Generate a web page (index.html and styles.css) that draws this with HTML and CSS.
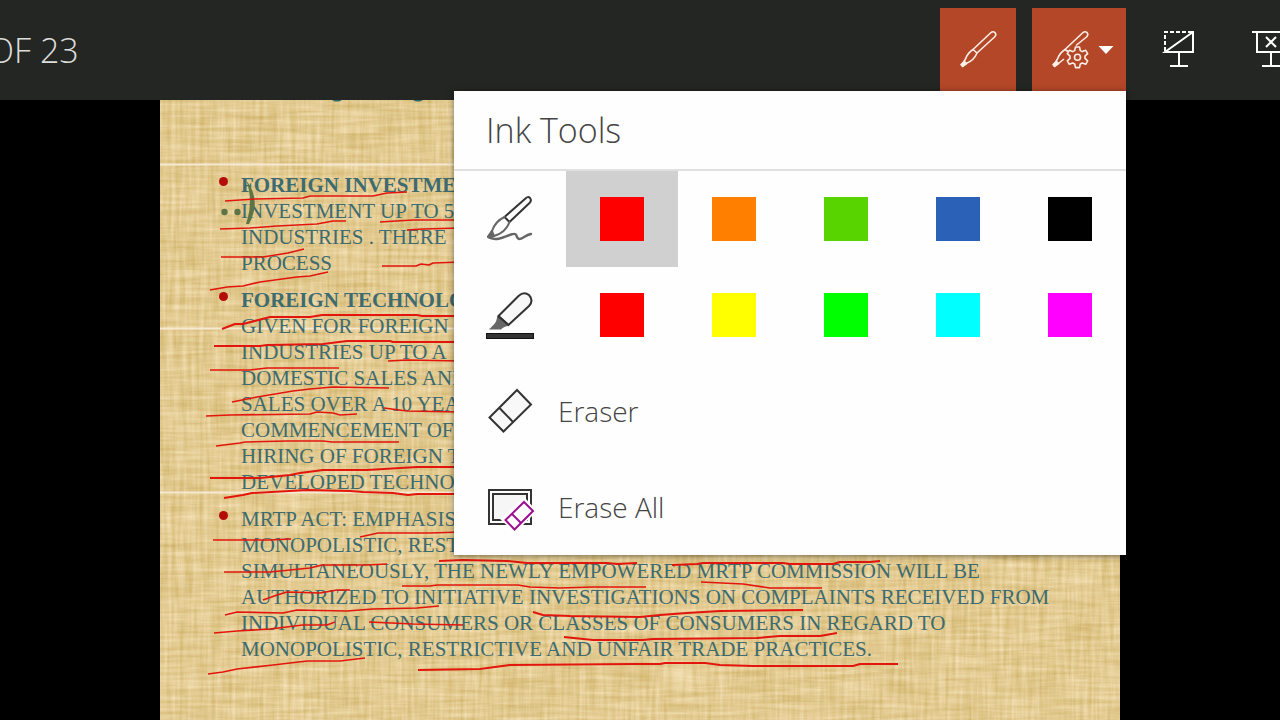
FILE: index.html
```html
<!DOCTYPE html>
<html lang="en">
<head>
<meta charset="utf-8">
<title>Ink Tools</title>
<link rel="stylesheet" href="styles.css">
</head>
<body>
<div class="app">
  <header class="bar">
    <p class="counter">OF 23</p>
    <nav class="tools" aria-label="Presentation tools">
      <button class="tool active" type="button" aria-label="Pen">
        <svg width="40" height="40" viewBox="0 0 40 40" fill="none" stroke="#fdeee6" stroke-width="1.6" stroke-linejoin="round"><path d="M15 19.500L32.500 3Q35 .8 37 2.600Q38.800 4.500 36.500 7L19 23ZM15 19.500C11 22 9 25 7.500 29L4 34.500L5 35.500L9 33C14 31 17 28 19 23"/><path d="M6.500 31.500L3 34.500L4.500 36.500L8.500 33.500Z" fill="#fdeee6"/></svg>
      </button>
      <button class="tool active wide" type="button" aria-label="Ink tools" aria-expanded="true">
        <svg width="40" height="40" viewBox="0 0 40 40" fill="none" stroke="#fdeee6" stroke-width="1.6" stroke-linejoin="round"><path d="M26 15.500L36.500 7Q38.800 4.500 37 2.600Q35 .8 32.500 3L15 19.500L18 21.500M15 19.500C11 22 9 25 7.500 29L4 34.500L5 35.500L9 33L14 29"/><path d="M6.500 31.500L3 34.500L4.500 36.500L8.500 33.500Z" fill="#fdeee6"/><path d="M25.500 17h4l.8 3.600 2 1 3.400-1.300 2 3.400-2.700 2.500v2.200l2.700 2.500-2 3.400-3.400-1.300-2 1-.8 3.600h-4l-.8-3.600-2-1-3.400 1.300-2-3.400 2.700-2.500v-2.200l-2.700-2.500 2-3.400 3.400 1.300 2-1Z" fill="#b34727"/><circle cx="27.500" cy="27.300" r="3"/></svg>
        <svg width="16" height="8" viewBox="0 0 16 8"><path d="M.5 0h15L8 8Z" fill="#fff"/></svg>
      </button>
      <button class="tool" type="button" aria-label="Hide ink">
        <svg width="40" height="40" viewBox="0 0 40 40" fill="none" stroke="#fff" stroke-width="2"><path d="M5 21V2H33" stroke-dasharray="4 2"/><path d="M33 1V22H5L33 2M19 22V36M10 36H28"/></svg>
      </button>
      <button class="tool" type="button" aria-label="End show">
        <svg width="40" height="40" viewBox="0 0 40 40" fill="none" stroke="#fff" stroke-width="2"><path d="M0 2H38M5 2V22H33V2M19 22V36M10 36H28"/><path d="M14 7L24 17M24 7L14 17"/></svg>
      </button>
    </nav>
  </header>

  <main class="stage">
    <article class="slide">
      <svg class="paper" aria-hidden="true">
        <filter id="warp" x="0" y="0" width="100%" height="100%" color-interpolation-filters="sRGB"><feTurbulence type="fractalNoise" baseFrequency="0.25 0.018" numOctaves="3" seed="4"/><feColorMatrix values=".24 0 0 0 .77 .3 0 0 0 .645 .5 0 0 0 .32 0 0 0 0 1"/></filter>
        <filter id="weft" x="0" y="0" width="100%" height="100%" color-interpolation-filters="sRGB"><feTurbulence type="fractalNoise" baseFrequency="0.018 0.250" numOctaves="3" seed="9"/><feColorMatrix values=".24 0 0 0 .77 .3 0 0 0 .645 .5 0 0 0 .32 0 0 0 0 1"/></filter>
        <pattern id="seam" width="164" height="164" patternUnits="userSpaceOnUse"><path d="M0 64.500H164" stroke="#f8ecd8" stroke-width="2"/></pattern>
        <rect width="100%" height="100%" filter="url(#warp)"/>
        <rect width="100%" height="100%" filter="url(#weft)" opacity=".5"/>
        <rect width="100%" height="400" fill="url(#seam)" opacity=".9"/>
      </svg>
      <ul class="points">
        <li><b>FOREIGN INVESTMENT</b><br>INVESTMENT UP TO 5<br>INDUSTRIES . THERE<br>PROCESS</li>
        <li><b>FOREIGN TECHNOLOGY</b><br>GIVEN FOR FOREIGN<br>INDUSTRIES UP TO A<br>DOMESTIC SALES AND<br>SALES OVER A 10 YEAR<br>COMMENCEMENT OF<br>HIRING OF FOREIGN T<br>DEVELOPED TECHNOLOGY</li>
        <li>MRTP ACT: EMPHASIS<br>MONOPOLISTIC, RESTRICTIVE<br>SIMULTANEOUSLY, THE NEWLY EMPOWERED MRTP COMMISSION WILL BE<br>AUTHORIZED TO INITIATIVE INVESTIGATIONS ON COMPLAINTS RECEIVED FROM<br>INDIVIDUAL CONSUMERS OR CLASSES OF CONSUMERS IN REGARD TO<br>MONOPOLISTIC, RESTRICTIVE AND UNFAIR TRADE PRACTICES.</li>
      </ul>
      <svg class="ink" viewBox="160 100 960 620" preserveAspectRatio="xMinYMin meet" aria-hidden="true">
        <g fill="#5d7546"><circle cx="224.500" cy="212" r="3.200"/><circle cx="237.500" cy="212" r="3.200"/><path d="M246 180Q262 200 249 224H246Q254 200 246 180Z"/></g>
        <path d="M332 100h10l-3 1.500h-4zM413 100h10l-3 1.500h-4z" fill="#2f6a70"/>
        <g class="strokes">
          <path d="M225 201L255 199 303 198 310 196 373 196 387 193 407 192M220 229L250 228 277 226 317 224 333 221 346 221M380 222L413 220 460 220M407 230L423 229 460 228M221 257L263 257 288 253 304 249M382 266L416 266 421 264 429 265 433 263 460 262M210 290L227 287 243 286 260 282 297 277 310 276 328 272"/>
          <path d="M232 402L257 397 293 391 310 389 333 387 389 388M384 408L407 411 460 412M388 361L407 360 460 361M210 370L250 370 267 368 339 368M206 416L230 415 310 414 317 412 333 413 340 415 357 414M216 446L240 443 245 442 287 441 323 441 332 442 399 442"/>
          <path d="M213 540L270 540 291 539M360 537L378 533 430 533 460 532M224 572L270 572 310 568 322 565 367 565 387 564M402 586L430 586 437 585 518 585 530 587 560 588 593 587 646 587M263 600L277 595 287 592 320 593 337 590 350 590M225 615L237 612 283 613 297 610 347 611 373 609 417 608 439 606M214 633L237 631 270 629 303 625 327 625 335 622M369 622L413 624 463 625M208 674L223 672 237 669 273 665 307 661 340 661 365 658M701 582L743 584 770 588 822 588"/>
        </g>
        <g class="strokes heavy">
          <path d="M222 329L235 324 243 324 270 317 310 317 322 315 417 315 422 316 460 316M214 346L260 346 267 345 323 344 347 341 390 341 393 342 460 342M210 478L260 478 290 475 300 473 323 470 367 470 417 467 460 467M224 498L243 495 252 493 307 490 350 491 363 492 393 493 408 495 417 494 460 494"/>
          <path d="M439 561L463 560 507 561 527 563 607 563 617 564 637 563M533 612L543 615 570 616 640 617 660 615 687 613 720 611 803 610M564 637L593 640 643 640 653 639 757 638 780 636 820 636 837 633M418 670L480 669 510 665 633 664 660 664 665 663 705 663 720 665 753 666 853 666 860 664 898 664M672 565L697 564 703 563 783 563 790 564 833 564 840 562 870 562 880 561"/>
        </g>
      </svg>
    </article>
  </main>

  <section class="menu" aria-labelledby="menu-title">
    <h1 class="menu-title" id="menu-title">Ink Tools</h1>
    <div class="row" role="group" aria-label="Pen colour">
      <span class="glyph"><svg width="48" height="48" viewBox="0 0 48 48" fill="none" stroke="#666" stroke-width="2" stroke-linejoin="round" stroke-linecap="round"><path d="M18.500 22L39.500 3.500Q42 1 44 3Q46 5.500 43.500 8L23.500 27Z" stroke="#333"/><path d="M18.500 22C12 25 8 30 6 36L2 42L8 41C15 39 21 34 23.500 27"/><path d="M6 36L2 41.500L3.500 43L8 41Z" fill="#666"/><path d="M4 43C11 46 18 42 25 39.500C33 37 29 43 33 44C37 44 39 40 45 39" stroke-width="2.400"/></svg></span>
      <button class="cell selected" type="button" aria-label="Red" aria-pressed="true"><span class="swatch red"></span></button>
      <button class="cell" type="button" aria-label="Orange"><span class="swatch orange"></span></button>
      <button class="cell" type="button" aria-label="Green"><span class="swatch green"></span></button>
      <button class="cell" type="button" aria-label="Blue"><span class="swatch blue"></span></button>
      <button class="cell" type="button" aria-label="Black"><span class="swatch black"></span></button>
    </div>
    <div class="row" role="group" aria-label="Highlighter colour">
      <span class="glyph"><svg width="48" height="48" viewBox="0 0 48 48" fill="none" stroke="#333" stroke-width="2"><path d="M12.500 25L32.500 5Q38 0 43 4Q48 9.500 43 15L22.500 34Z" fill="#f8f8f8"/><path d="M11 26C11 32 6 35 3 38.500H15C17 36 20 35.500 22.500 34.500L12.500 25Z" fill="#666" stroke="none"/><path d="M12 25L23 34.500"/><rect x="0.500" y="42.500" width="47" height="5" fill="#333" stroke="#111" stroke-width="1"/></svg></span>
      <button class="cell" type="button" aria-label="Red highlighter"><span class="swatch red"></span></button>
      <button class="cell" type="button" aria-label="Yellow highlighter"><span class="swatch yellow"></span></button>
      <button class="cell" type="button" aria-label="Lime highlighter"><span class="swatch lime"></span></button>
      <button class="cell" type="button" aria-label="Cyan highlighter"><span class="swatch cyan"></span></button>
      <button class="cell" type="button" aria-label="Magenta highlighter"><span class="swatch magenta"></span></button>
    </div>
    <button class="command" type="button">
      <svg width="48" height="48" viewBox="0 0 48 48" fill="#f8f8f8" stroke="#333" stroke-width="2"><path d="M31 3L45 17.500L17.500 44.500L3.500 30.500ZM13.500 21L27 35"/></svg>
      Eraser
    </button>
    <button class="command" type="button">
      <svg width="48" height="48" viewBox="0 0 48 48" fill="none" stroke="#333" stroke-width="2"><path d="M3 7H45V41H3Z"/><path d="M7 11H41V37H7Z" fill="#f6f6f6"/><path d="M38 14L51 28L29 50L14 36Z" fill="#fdfefd" stroke="none"/><path d="M38 19L47 28L28.500 46.500L19.500 37Z" fill="#fff" stroke="#9b0f90"/><path d="M26 31L35 40" stroke="#9b0f90"/></svg>
      Erase All
    </button>
  </section>
</div>
</body>
</html>
```
FILE: styles.css
```css
* { box-sizing: border-box; }

body {
  margin: 0;
  background: #000;
}

button {
  padding: 0;
  border: 0;
  background: transparent;
  font: inherit;
  color: inherit;
}

svg { display: block; }

.app {
  position: relative;
  display: flex;
  flex-direction: column;
  min-height: 100vh;
  overflow: hidden;
  font-family: "Open Sans", "Noto Sans", sans-serif;
  font-weight: 300;
}

.bar {
  display: flex;
  justify-content: space-between;
  height: 100px;
  padding-top: 8px;
  background: #242623;
  overflow: hidden;
}

.counter {
  margin: 0 0 0 -12px;
  color: #dcdedb;
  font-size: 34px;
  line-height: 84px;
}

.tools {
  display: flex;
  gap: 16px;
  margin-right: -30px;
}

.tool {
  display: flex;
  align-items: center;
  justify-content: center;
  width: 76px;
  height: 84px;
}

.wide {
  gap: 8px;
  width: 94px;
  padding-left: 6px;
}

.active { background: #b34727; }

.stage {
  display: flex;
  flex: 1;
  justify-content: center;
}

.slide {
  position: relative;
  width: 75%;
  padding: 72px 40px 40px 81px;
}

.paper,
.ink {
  position: absolute;
  inset: 0;
  width: 100%;
  height: 100%;
}

.points {
  position: relative;
  display: flex;
  flex-direction: column;
  gap: 11px;
  margin: 0;
  padding: 0;
  list-style: none;
  color: #3d6b70;
  font: 400 21px/26px "Liberation Serif", serif;
  white-space: nowrap;
}

.points li { position: relative; }

.points li::before {
  content: "";
  position: absolute;
  top: 5px;
  left: -22px;
  width: 9px;
  height: 9px;
  border-radius: 50%;
  background: #b40c08;
}

.strokes {
  fill: none;
  stroke: #e2160c;
  stroke-width: 1.6;
  stroke-linejoin: round;
}

.heavy { stroke-width: 2; }

.menu {
  position: absolute;
  top: 91px;
  right: 154px;
  width: 672px;
  background: #fdfefd;
  color: #444;
  box-shadow: 0 1px 6px rgba(0, 0, 0, 0.5);
}

.menu-title {
  margin: 0;
  padding-left: 32px;
  border-bottom: 2px solid #dfe0df;
  font-size: 34px;
  font-weight: 300;
  line-height: 78px;
}

.row {
  display: grid;
  grid-template-columns: repeat(6, 1fr);
  height: 96px;
}

.glyph,
.cell {
  display: flex;
  align-items: center;
  justify-content: center;
}

.selected { background: #cfd0cf; }

.swatch {
  width: 44px;
  height: 44px;
}

.red { background: #f00; }
.orange { background: #ff8000; }
.green { background: #58d400; }
.blue { background: #2b62b8; }
.black { background: #000; }
.yellow { background: #ff0; }
.lime { background: #0f0; }
.cyan { background: #0ff; }
.magenta { background: #f0f; }

.command {
  display: flex;
  align-items: center;
  gap: 24px;
  width: 100%;
  height: 96px;
  padding-left: 32px;
  font-size: 28px;
}
```
